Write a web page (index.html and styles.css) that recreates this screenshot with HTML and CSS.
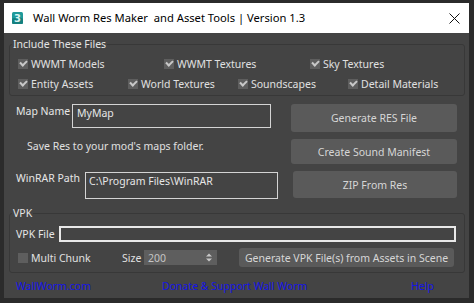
FILE: index.html
```html
<!DOCTYPE html>
<html>
  <head>
    <title>Wall Worm Res Maker and Asset Tools</title>
    <meta name="viewport" content="width=device-width, initial-scale=1.0" />
    <link rel="stylesheet" href="styles.css">
  </head>

  <body>
    <div class="window">
      <!-- Title bar -->
      <div class="titlebar">
        <svg class="app-icon" width="11" height="12" viewBox="0 0 11 12">
          <rect x="0" y="0" width="11" height="12" rx="1.5" fill="#1f9a9a" />
          <rect x="0" y="6" width="11" height="6" rx="1.5" fill="#15807f" />
          <text x="5.5" y="10" text-anchor="middle" font-size="10" font-weight="bold" font-family="DejaVu Sans, sans-serif" fill="#d8f4f2">3</text>
        </svg>
        <span class="title">Wall Worm Res Maker&nbsp; and Asset Tools | Version 1.3</span>
        <svg class="close" width="11" height="11" viewBox="0 0 11 11">
          <path d="M0.5 0.5 L10.5 10.5 M10.5 0.5 L0.5 10.5" stroke="#111" stroke-width="1" />
        </svg>
      </div>

      <div class="content">
        <fieldset class="group files">
          <legend>Include These Files</legend>
          <div class="check-row three">
            <label class="check"><span class="box checked"></span>WWMT Models</label>
            <label class="check"><span class="box checked"></span>WWMT Textures</label>
            <label class="check"><span class="box checked"></span>Sky Textures</label>
          </div>
          <div class="check-row four">
            <label class="check"><span class="box checked"></span>Entity Assets</label>
            <label class="check"><span class="box checked"></span>World Textures</label>
            <label class="check"><span class="box checked"></span>Soundscapes</label>
            <label class="check"><span class="box checked"></span>Detail Materials</label>
          </div>
        </fieldset>

        <div class="main">
          <div class="settings">
            <div class="field-row">
              <span class="label map-label">Map Name</span>
              <input class="text-input map-name" type="text" value="MyMap" />
            </div>
            <p class="note">Save Res to your mod's maps folder.</p>
            <div class="field-row">
              <span class="label winrar-label">WinRAR Path</span>
              <input class="text-input winrar" type="text" value="C:\Program Files\WinRAR" />
            </div>
          </div>
          <div class="actions">
            <button class="btn res">Generate RES File</button>
            <button class="btn sound">Create Sound Manifest</button>
            <button class="btn zip">ZIP From Res</button>
          </div>
        </div>

        <fieldset class="group vpk">
          <legend>VPK</legend>
          <div class="vpk-row">
            <span class="label vpk-label">VPK File</span>
            <input class="text-input vpk-file" type="text" value="" />
          </div>
          <div class="vpk-row options">
            <label class="check multi"><span class="box"></span>Multi Chunk</label>
            <span class="label size-label">Size</span>
            <div class="spinner">
              <span>200</span>
              <svg width="6" height="9" viewBox="0 0 6 9">
                <path d="M0 3.5 L3 0.5 L6 3.5 Z M0 5.5 L3 8.5 L6 5.5 Z" fill="#c8c8c8" />
              </svg>
            </div>
            <button class="btn vpk-btn">Generate VPK File(s) from Assets in Scene</button>
          </div>
        </fieldset>

        <div class="footer">
          <a href="#" class="link">WallWorm.com</a>
          <a href="#" class="link">Donate &amp; Support Wall Worm</a>
          <a href="#" class="link">Help</a>
        </div>
      </div>
    </div>
  </body>
</html>
```

FILE: styles.css
```css
/* Dark 3ds Max style dialog */
body {
  margin: 0;
  padding: 3px 0 0 4px;
  background-color: #2b2b2b;
  font-family: "Noto Sans", "Open Sans", sans-serif;
  font-size: 10.5px;
  line-height: 14px;
  color: #dcdcdc;
}

.window {
  width: 465px;
  height: 295px;
  background-color: #444444;
}

.titlebar {
  height: 30px;
  background-color: #ffffff;
  display: flex;
  align-items: center;
  padding-left: 8px;
  color: #000;
  font-size: 11.2px;
}

.app-icon {
  margin-right: 10px;
  margin-top: -1px;
}

.title {
  flex: 1;
  white-space: pre;
}

.close {
  margin-right: 9px;
}

.content {
  padding: 0 4px 0 5px;
}

.group {
  margin: 0;
  padding: 0;
  min-width: 0;
  border: 1px solid #383838;
  border-radius: 3px;
}

.group legend {
  padding: 0 1px;
  color: #e4e4e4;
}

.files {
  margin-top: 4px;
  padding: 3px 8px 1px;
}

.files legend {
  margin-left: -6px;
}

.check-row {
  display: grid;
  height: 20px;
  align-items: center;
}

.check-row.three {
  grid-template-columns: repeat(3, 146px);
}

.check-row.four {
  grid-template-columns: repeat(4, 110px);
}

.check {
  display: flex;
  align-items: center;
  white-space: nowrap;
  color: #e0e0e0;
}

.box {
  width: 10px;
  height: 10px;
  margin-right: 3px;
  background-color: #5e5e5e;
  position: relative;
}

.box.checked::after {
  content: "";
  position: absolute;
  left: 2px;
  top: 1px;
  width: 5px;
  height: 3px;
  border-left: 2px solid #c8c8c8;
  border-bottom: 2px solid #c8c8c8;
  transform: rotate(-45deg);
}

.main {
  display: flex;
  justify-content: space-between;
  margin-top: 8px;
}

.settings {
  margin-left: 7px;
}

.field-row {
  display: flex;
  align-items: flex-start;
}

.label {
  color: #e6e6e6;
  white-space: nowrap;
}

.map-label {
  width: 56px;
}

.winrar-label {
  width: 69px;
}

.vpk-label {
  width: 43px;
}

.text-input {
  box-sizing: border-box;
  background-color: #444444;
  border: 1px solid #d4d4d4;
  color: #e6e6e6;
  font-family: inherit;
  font-size: 10.5px;
  outline: none;
  margin: 0;
}

.map-name {
  width: 199px;
  height: 24px;
  padding: 0 4px 6px;
}

.winrar {
  width: 193px;
  height: 27px;
  margin-top: 1px;
  padding: 0 3px 9px;
}

.note {
  margin: 11px 0 18px 11px;
  color: #e0e0e0;
}

.actions {
  width: 166px;
  display: flex;
  flex-direction: column;
  align-items: flex-end;
  gap: 7px;
  margin-right: 8px;
}

.btn {
  border: none;
  border-radius: 3px;
  background-color: #5a5a5a;
  color: #d6d6d6;
  font-family: inherit;
  font-size: 10.5px;
  padding: 0;
  cursor: pointer;
}

.btn:hover {
  background-color: #656565;
}

.res {
  width: 166px;
  height: 28px;
}

.sound {
  width: 166px;
  height: 25px;
}

.zip {
  width: 164px;
  height: 27px;
}

.vpk {
  margin-top: 7px;
  padding: 6px 8px 5px 6px;
}

.vpk legend {
  margin-left: -4px;
}

.vpk-row {
  display: flex;
  align-items: center;
}

.vpk-file {
  flex: 1;
  height: 16px;
  border: 2px solid #e8e8e8;
}

.vpk-row.options {
  margin-top: 6px;
  height: 19px;
}

.multi {
  margin-left: 2px;
  width: 104px;
}

.size-label {
  width: 22px;
  color: #e0e0e0;
}

.spinner {
  width: 73px;
  height: 15px;
  background-color: #5e5e5e;
  color: #c4c4c4;
  display: flex;
  align-items: center;
  justify-content: space-between;
  padding: 0 5px 0 4px;
  box-sizing: border-box;
}

.vpk-btn {
  width: 215px;
  height: 19px;
  margin-left: 22px;
}

.footer {
  display: grid;
  grid-template-columns: 146px 249px auto;
  margin-top: 6px;
  padding-left: 7px;
}

.link {
  color: #1414e6;
  text-decoration: none;
  justify-self: start;
}
```
